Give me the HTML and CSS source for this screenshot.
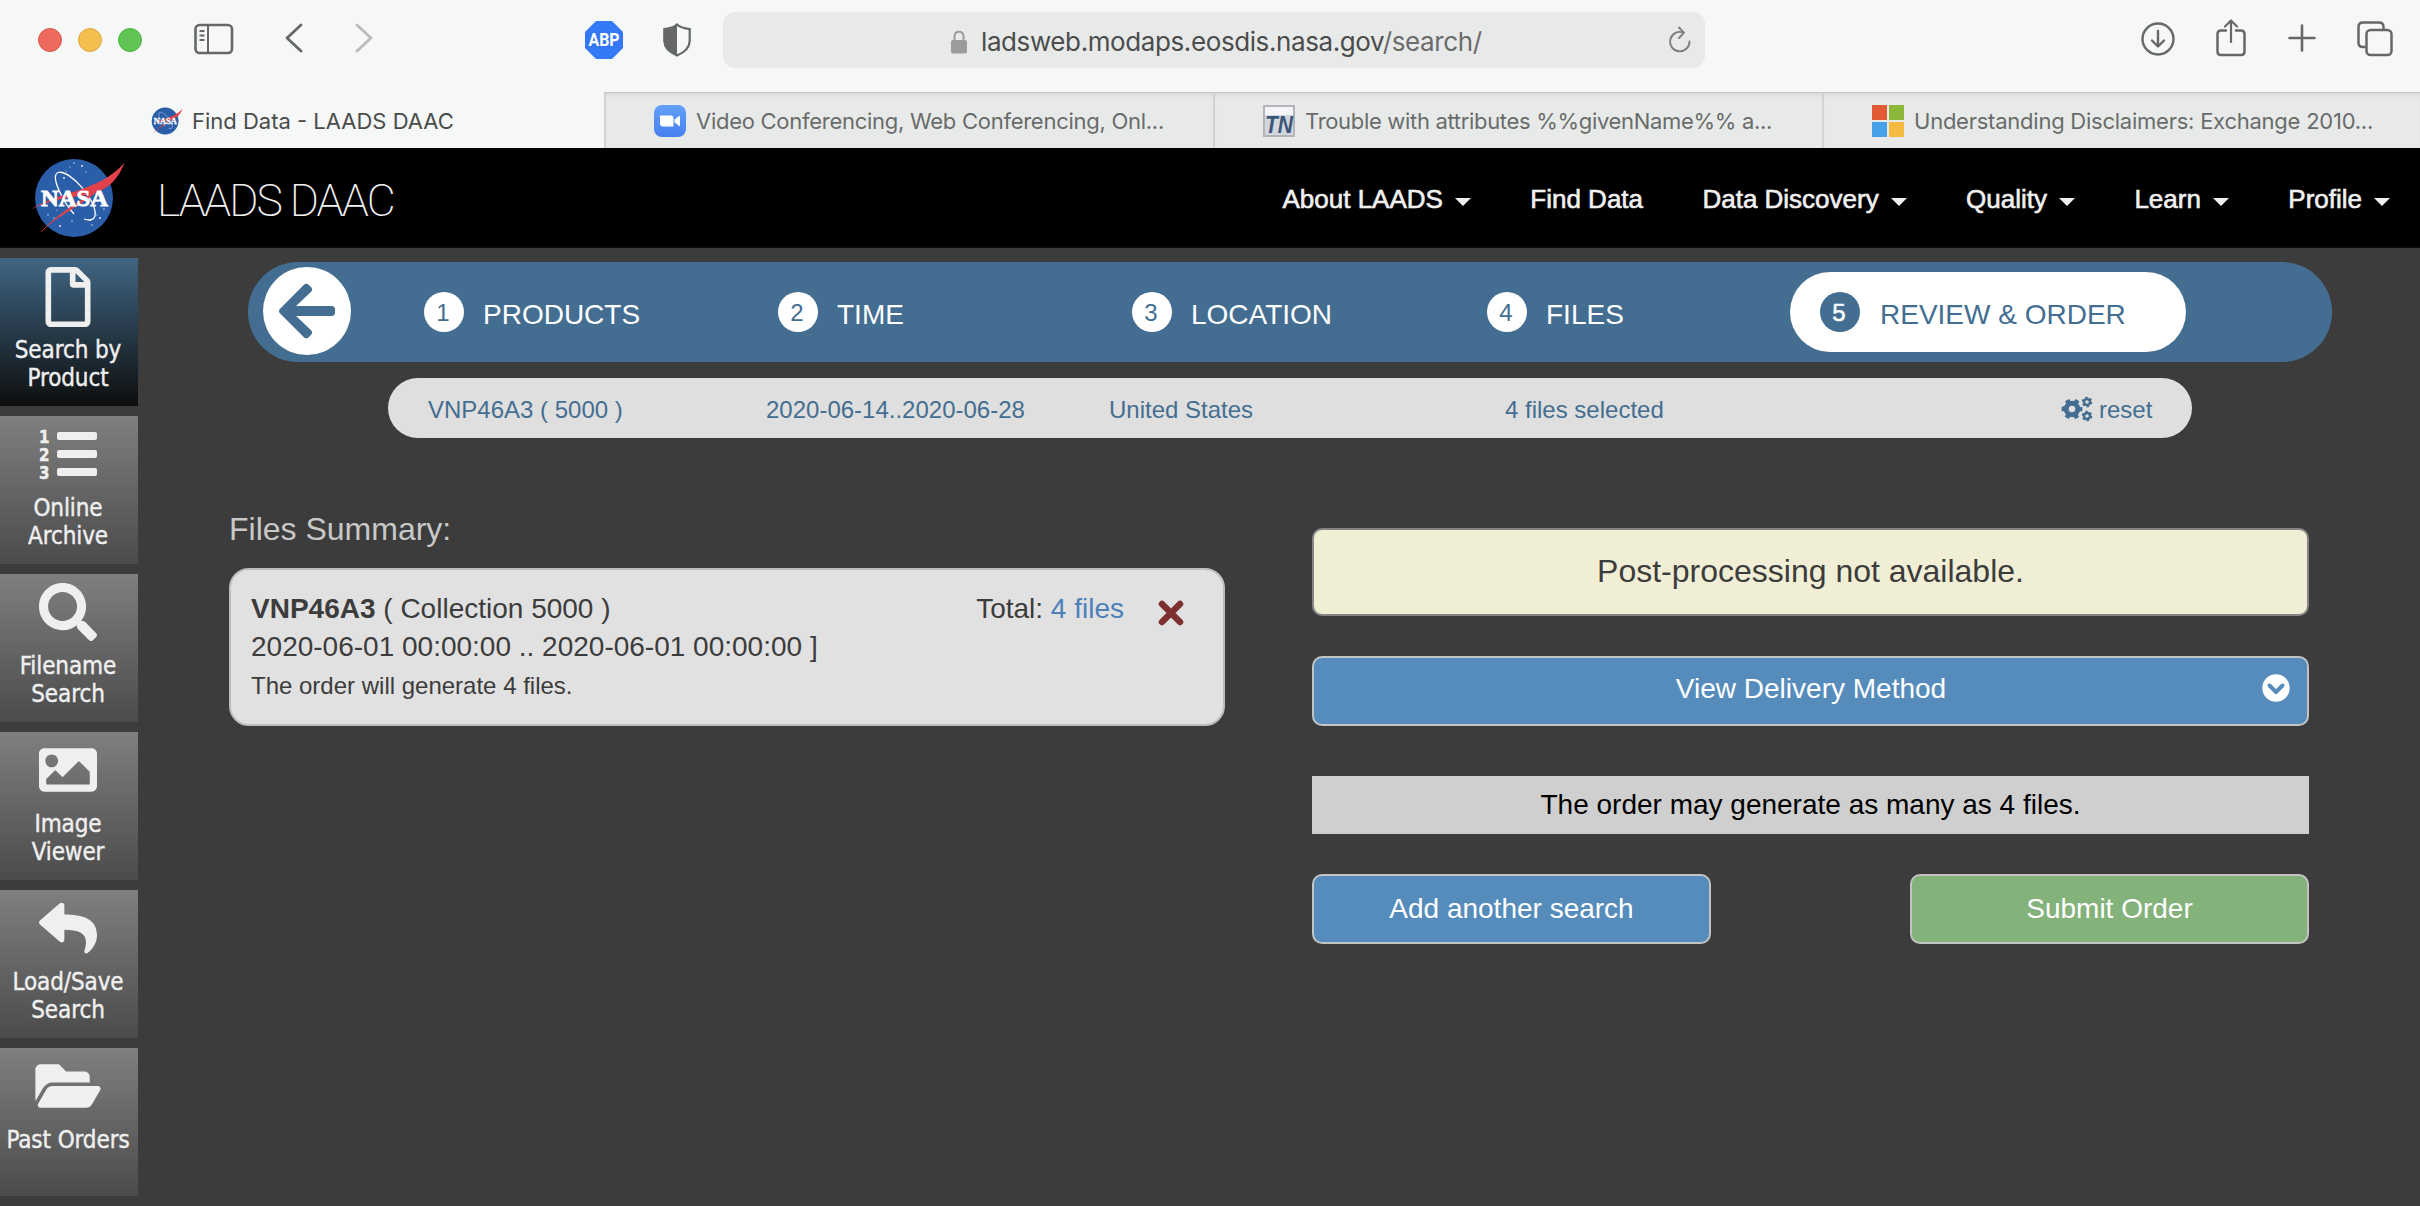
FILE: index.html
```html
<!DOCTYPE html>
<html lang="en">
<head>
<meta charset="utf-8">
<title>Find Data - LAADS DAAC</title>
<link rel="stylesheet" href="styles.css">
</head>
<body>
<div class="toolbar">
  <div class="lights"><i class="red"></i><i class="amber"></i><i class="green"></i></div>
  <svg class="ico-sidebar" width="40" height="32" viewBox="0 0 40 32" fill="none" stroke="#656867" stroke-width="2.600"><rect x="1.500" y="2" width="36.500" height="28" rx="4"/><path d="M14 2V30" stroke-width="2"/><path d="M5.500 8H10.500M5.500 12.500H10.500M5.500 17H10.500" stroke-width="1.800"/></svg>
  <svg class="ico-back" width="18" height="30" viewBox="0 0 18 30" fill="none" stroke="#656867" stroke-width="2.800" stroke-linecap="round" stroke-linejoin="round"><path d="M16 2L2 15L16 28"/></svg>
  <svg class="ico-fwd" width="18" height="30" viewBox="0 0 18 30" fill="none" stroke="#b9bbba" stroke-width="2.800" stroke-linecap="round" stroke-linejoin="round"><path d="M2 2L16 15L2 28"/></svg>
  <svg class="ico-abp" width="38" height="38" viewBox="0 0 38 38"><path d="M11 0H27L38 11V27L27 38H11L0 27V11Z" fill="#3478f6"/><text x="3.500" y="25" textLength="31" lengthAdjust="spacingAndGlyphs" font-family="Roboto, sans-serif" font-weight="700" font-size="17.500" fill="#fff">ABP</text></svg>
  <svg class="ico-shield" width="28" height="34" viewBox="0 0 28 34"><path d="M14 1.500C17 4.500 22 5.500 26.700 6V18C26.500 25 20 30 14 32.500C8 30 1.500 25 1.300 18V6C6 5.500 11 4.500 14 1.500Z" fill="none" stroke="#656867" stroke-width="2.200"/><path d="M14 1.500V32.500C8 30 1.500 25 1.300 18V6C6 5.500 11 4.500 14 1.500Z" fill="#656867"/></svg>
  <div class="address">
    <svg class="ico-lock" width="16" height="24" viewBox="0 0 16 24"><path d="M3.500 11V6.500C3.500 0 12.500 0 12.500 6.500V11" fill="none" stroke="#9a9c9b" stroke-width="2"/><rect x="0" y="10" width="16" height="13.500" rx="2" fill="#9a9c9b"/></svg>
    <span class="url">ladsweb.modaps.eosdis.nasa.gov<span class="path">/search/</span></span>
    <svg class="ico-reload" width="22" height="28" viewBox="0 0 22 28" fill="none" stroke="#7d807f" stroke-width="1.900" stroke-linecap="round" stroke-linejoin="round"><path d="M20.500 15.500A9.700 9.700 0 1 1 14 6.500"/><path d="M10 1.500L15 6.700L10 12"/></svg>
  </div>
  <svg class="ico-down" width="34" height="34" viewBox="0 0 34 34" fill="none" stroke="#656867" stroke-width="2.400" stroke-linecap="round" stroke-linejoin="round"><circle cx="17" cy="17" r="15.500"/><path d="M17 9V24M11 18.500L17 24.500L23 18.500"/></svg>
  <svg class="ico-share" width="30" height="38" viewBox="0 0 30 38" fill="none" stroke="#656867" stroke-width="2.500" stroke-linecap="round" stroke-linejoin="round"><path d="M10 11.500H5Q1.500 11.500 1.500 15V32.500Q1.500 36 5 36H25Q28.500 36 28.500 32.500V15Q28.500 11.500 25 11.500H20"/><path d="M15 23V2M9 7.500L15 1.500L21 7.500" stroke-width="2.200"/></svg>
  <svg class="ico-plus" width="28" height="28" viewBox="0 0 28 28" stroke="#656867" stroke-width="2.600" stroke-linecap="round"><path d="M14 1.500V26.500M1.500 14H26.500"/></svg>
  <svg class="ico-tabs" width="36" height="36" viewBox="0 0 36 36" fill="none" stroke="#656867" stroke-width="2.500"><rect x="9.500" y="9" width="25" height="25" rx="4"/><path d="M9.500 26H6Q1.500 26 1.500 22V6Q1.500 1.500 6 1.500H22Q26.500 1.500 26.500 6V9"/></svg>
</div>

<div class="tabs">
  <div class="tab active">
    <svg width="33" height="28" viewBox="0 0 96 80">
      <circle cx="44" cy="40" r="39" fill="#2b5ea8"/>
      <path d="M44 56C33 44 20 18 28 14.500C40 11 68 44 65 58Q63 64 54 61" fill="none" stroke="#b9cbe6" stroke-width="1.600"/>
      <path d="M.500 51.500C30 33 68 34 94.500 5C86 26 74 33 58 37C34 40 20 42 .500 51.500Z" fill="#e0414a"/>
      <path d="M11 74C34 50 52 44 78 23C56 47 30 54 11 74Z" fill="#e0414a" stroke="#e0414a" stroke-width=".6"/>
      <text x="11" y="47.500" textLength="67" lengthAdjust="spacingAndGlyphs" font-family="Liberation Serif, serif" font-weight="700" font-size="22.500" fill="#fff" stroke="#fff" stroke-width=".8">NASA</text>
    </svg>
    <span class="t1">Find Data - LAADS DAAC</span>
  </div>
  <div class="tab">
    <svg width="32" height="32" viewBox="0 0 32 32"><defs><linearGradient id="zg" x1="0" y1="0" x2="0" y2="1"><stop offset="0" stop-color="#62a0f8"/><stop offset="1" stop-color="#4680f0"/></linearGradient></defs><rect width="32" height="32" rx="8" fill="url(#zg)"/><path d="M6 10.500H16.500Q19.500 10.500 19.500 13.500V21.500H9Q6 21.500 6 18.500ZM20.500 14.500L26 10.500V21.500L20.500 17.500Z" fill="#fff"/></svg>
    <span class="t2">Video Conferencing, Web Conferencing, Onl...</span>
  </div>
  <div class="tab">
    <svg width="32" height="32" viewBox="0 0 32 32"><rect x="1" y="1" width="30" height="30" fill="#d3d6df" stroke="#b3b5b8" stroke-width="2"/><rect x="2" y="2" width="28" height="8" fill="#f4f5f6"/><text x="2" y="28" textLength="28" lengthAdjust="spacingAndGlyphs" font-family="Liberation Sans, sans-serif" font-style="italic" font-weight="700" font-size="23" fill="#3c5678">TN</text></svg>
    <span class="t3">Trouble with attributes %%givenName%% a...</span>
  </div>
  <div class="tab">
    <svg width="32" height="32" viewBox="0 0 32 32"><path d="M0 0H15V15H0Z" fill="#e25a33"/><path d="M17 0H32V15H17Z" fill="#8cb738"/><path d="M0 17H15V32H0Z" fill="#46a0ea"/><path d="M17 17H32V32H17Z" fill="#f5ba41"/></svg>
    <span class="t4">Understanding Disclaimers: Exchange 2010...</span>
  </div>
</div>

<header class="site">
  <svg class="logo" width="96" height="80" viewBox="0 0 96 80">
    <circle cx="44" cy="40" r="39" fill="#2b5ea8"/>
    <g fill="#dfe8f5">
      <circle cx="34" cy="20" r="1"/><circle cx="52" cy="8" r="1"/><circle cx="44" cy="5" r=".7"/><circle cx="40" cy="9" r=".6"/><circle cx="56" cy="14" r=".6"/><circle cx="36" cy="13" r=".6"/>
      <circle cx="30" cy="68" r="1"/><circle cx="24" cy="60" r=".7"/><circle cx="18" cy="57" r=".7"/><circle cx="42" cy="63" r=".7"/><circle cx="70" cy="60" r="1"/><circle cx="74" cy="51" r=".8"/><circle cx="62" cy="67" r=".7"/><circle cx="27" cy="52" r=".6"/><circle cx="67" cy="57" r=".6"/>
    </g>
    <path d="M44 56C33 44 20 18 28 14.500C40 11 68 44 65 58Q63 64 54 61" fill="none" stroke="#fff" stroke-width="1.300"/>
    <path d="M.500 51.500C30 33 68 34 94.500 5C86 26 74 33 58 37C34 40 20 42 .500 51.500Z" fill="#e0414a"/>
    <path d="M11 74C34 50 52 44 78 23C56 47 30 54 11 74Z" fill="#e0414a" stroke="#e0414a" stroke-width=".6"/>
    <text x="11" y="47.500" textLength="67" lengthAdjust="spacingAndGlyphs" font-family="Liberation Serif, serif" font-weight="700" font-size="22.500" fill="#fff" stroke="#fff" stroke-width=".8">NASA</text>
  </svg>
  <span class="brand">LAADS DAAC</span>
  <nav>
    <a>About LAADS<i class="caret"></i></a>
    <a>Find Data</a>
    <a>Data Discovery<i class="caret"></i></a>
    <a>Quality<i class="caret"></i></a>
    <a>Learn<i class="caret"></i></a>
    <a>Profile<i class="caret"></i></a>
  </nav>
</header>

<div class="page">
  <aside>
    <a class="side active"><svg width="60" height="60" viewBox="-64 0 512 512"><path d="M369.900 97.900L286 14C277 5 264.800-.1 252.100-.1H48C21.500 0 0 21.500 0 48v416c0 26.500 21.500 48 48 48h288c26.500 0 48-21.500 48-48V131.900c0-12.700-5.100-25-14.100-34zM332.100 128H256V51.900l76.100 76.100zM48 464V48h160v104c0 13.300 10.700 24 24 24h104v288H48z"/></svg><span>Search by<br>Product</span></a>
    <a class="side"><svg width="60" height="60" viewBox="0 0 60 60"><rect x="19" y="7" width="40" height="8" rx="2"/><rect x="19" y="25" width="40" height="8" rx="2"/><rect x="19" y="43" width="40" height="8" rx="2"/><g font-family="DejaVu Sans" font-weight="700" font-size="18.500" letter-spacing="0" stroke="#efefef" stroke-width=".5"><text x="1" y="18" textLength="10.500" lengthAdjust="spacingAndGlyphs">1</text><text x="1" y="36" textLength="10.500" lengthAdjust="spacingAndGlyphs">2</text><text x="1" y="54" textLength="10.500" lengthAdjust="spacingAndGlyphs">3</text></g></svg><span>Online<br>Archive</span></a>
    <a class="side"><svg width="58" height="58" viewBox="0 0 512 512"><path d="M505 442.700L405.300 343c-4.500-4.500-10.600-7-17-7H372c27.600-35.300 44-79.700 44-128C416 93.100 322.900 0 208 0S0 93.100 0 208s93.100 208 208 208c48.300 0 92.700-16.400 128-44v16.300c0 6.400 2.500 12.500 7 17l99.700 99.700c9.400 9.400 24.600 9.400 33.900 0l28.300-28.300c9.400-9.400 9.400-24.600.1-34zM208 336c-70.700 0-128-57.200-128-128 0-70.700 57.200-128 128-128 70.700 0 128 57.200 128 128 0 70.700-57.200 128-128 128z"/></svg><span>Filename<br>Search</span></a>
    <a class="side"><svg width="58" height="58" viewBox="0 0 512 512"><path d="M464 448H48c-26.510 0-48-21.490-48-48V112c0-26.510 21.490-48 48-48h416c26.510 0 48 21.490 48 48v288c0 26.510-21.490 48-48 48zM112 120c-30.928 0-56 25.072-56 56s25.072 56 56 56 56-25.072 56-56-25.072-56-56-56zM64 384h384V272l-87.515-87.515c-4.686-4.686-12.284-4.686-16.971 0L208 320l-55.515-55.515c-4.686-4.686-12.284-4.686-16.971 0L64 336v48z"/></svg><span>Image<br>Viewer</span></a>
    <a class="side"><svg width="58" height="58" viewBox="0 0 512 512"><path d="M8.309 189.836L184.313 37.851C199.719 24.546 224 35.347 224 56.015v80.053c160.629 1.839 288 34.032 288 186.258 0 61.441-39.581 122.309-83.333 154.132-13.653 9.931-33.111-2.533-28.077-18.631 45.344-145.012-21.507-183.510-176.590-185.742V360c0 20.700-24.300 31.453-39.687 18.164l-176.004-152c-11.071-9.562-11.086-26.753 0-36.328z"/></svg><span>Load/Save<br>Search</span></a>
    <a class="side"><svg width="66" height="58" viewBox="0 0 576 512"><path d="M572.694 292.093L500.270 416.248A63.997 63.997 0 0 1 444.989 448H45.025c-18.523 0-30.064-20.093-20.731-36.093l72.424-124.155A64 64 0 0 1 152 256h399.964c18.523 0 30.064 20.093 20.730 36.093zM152 224h328v-48c0-26.510-21.490-48-48-48H272l-64-64H48C21.490 64 0 85.490 0 112v278.046l69.077-118.418C86.214 242.250 117.989 224 152 224z"/></svg><span>Past Orders</span></a>
  </aside>

  <main>
    <div class="steps">
      <a class="back"><svg width="56" height="64" viewBox="0 0 448 512"><path fill="#446e91" d="M257.500 445.100l-22.200 22.200c-9.400 9.400-24.600 9.400-33.900 0L7 273c-9.400-9.400-9.400-24.600 0-33.900L201.400 44.700c9.400-9.400 24.600-9.400 33.900 0l22.200 22.200c9.500 9.500 9.300 25-.4 34.300L136.600 216H424c13.300 0 24 10.700 24 24v32c0 13.300-10.700 24-24 24H136.600l120.500 114.800c9.800 9.300 10 24.800.4 34.300z"/></svg></a>
      <a class="step"><b>1</b><span>PRODUCTS</span></a>
      <a class="step"><b>2</b><span>TIME</span></a>
      <a class="step"><b>3</b><span>LOCATION</span></a>
      <a class="step"><b>4</b><span>FILES</span></a>
      <a class="step current"><b>5</b><span>REVIEW &amp; ORDER</span></a>
    </div>
    <div class="criteria">
      <span>VNP46A3 ( 5000 )</span>
      <span>2020-06-14..2020-06-28</span>
      <span>United States</span>
      <span>4 files selected</span>
      <span class="reset"><svg width="32" height="26" viewBox="0 0 32 26" fill="none" stroke="#446e91"><circle cx="11" cy="13" r="5.800" stroke-width="5"/><circle cx="11" cy="13" r="8.900" stroke-width="3" stroke-dasharray="4.600 4.720" stroke-dashoffset="2.300"/><circle cx="26" cy="6" r="3" stroke-width="2.400"/><circle cx="26" cy="6" r="4.500" stroke-width="1.600" stroke-dasharray="2.500 2.212"/><circle cx="26" cy="20" r="3" stroke-width="2.400"/><circle cx="26" cy="20" r="4.500" stroke-width="1.600" stroke-dasharray="2.500 2.212"/></svg>reset</span>
    </div>
    <div class="columns">
      <section class="summary">
        <h2>Files Summary:</h2>
        <div class="card">
          <div class="info">
            <p><strong>VNP46A3</strong> ( Collection 5000 )</p>
            <p>2020-06-01 00:00:00 .. 2020-06-01 00:00:00 ]</p>
            <p class="small">The order will generate 4 files.</p>
          </div>
          <div class="total">Total: <a>4 files</a></div>
          <svg class="remove" width="26" height="26" viewBox="0 0 26 26" stroke="#7e2f2f" stroke-width="6.500" stroke-linecap="round"><path d="M4 4L22 22M22 4L4 22"/></svg>
        </div>
      </section>
      <section class="order">
        <div class="notice">Post-processing not available.</div>
        <div class="btn delivery"><span>View Delivery Method</span><svg width="28" height="28" viewBox="0 0 28 28"><circle cx="14" cy="14" r="13.700" fill="#fff"/><path d="M7.500 11.500L14 18L20.500 11.500" fill="none" stroke="#568cbb" stroke-width="4" stroke-linecap="round" stroke-linejoin="round"/></svg></div>
        <div class="count">The order may generate as many as 4 files.</div>
        <div class="actions"><div class="btn">Add another search</div><div class="btn submit">Submit Order</div></div>
      </section>
    </div>
  </main>
</div>
</body>
</html>
```
FILE: styles.css
```css
* { box-sizing: border-box; }
body { margin: 0; width: 2420px; height: 1206px; overflow: hidden; background: #3c3c3c; font-family: "Liberation Sans", Arial, sans-serif; }
svg { display: block; flex: none; }
h2, p { margin: 0; font-weight: 400; }

/* Browser toolbar */
.toolbar { height: 92px; background: #f6f8f7; display: flex; align-items: flex-start; padding-left: 38px; }
.lights { display: flex; gap: 16px; margin-top: 28px; }
.lights i { width: 24px; height: 24px; border-radius: 50%; border-width: 1px; border-style: solid; }
.red { background: #ec6a5e; border-color: #d8584d; }
.amber { background: #f4bf4f; border-color: #dca63c; }
.green { background: #61c554; border-color: #4fae43; }
.ico-sidebar { margin: 23px 0 0 52px; }
.ico-back { margin: 23px 0 0 51px; }
.ico-fwd { margin: 23px 0 0 52px; }
.ico-abp { margin: 21px 0 0 212px; }
.ico-shield { margin: 23px 0 0 40px; }
.address { width: 982px; height: 56px; margin: 12px 0 0 32px; background: #e8eae9; border-radius: 12px; display: flex; padding-left: 228px; }
.ico-lock { margin-top: 18px; }
.url { width: 500px; margin-left: 14px; margin-top: 1px; font: 400 26px/58px Inter, sans-serif; letter-spacing: -.4px; color: #4b4d4c; white-space: nowrap; }
.url .path { color: #6a6c6b; }
.ico-reload { margin: 14px 0 0 188px; }
.ico-down { margin: 22px 0 0 436px; }
.ico-share { margin: 19px 0 0 41px; }
.ico-plus { margin: 24px 0 0 42px; }
.ico-tabs { margin: 21px 0 0 41px; }

/* Tab strip */
.tabs { height: 56px; display: grid; grid-template-columns: 604px 609px 609px 1fr; background: #e8eae9; }
.tab { display: flex; align-items: center; padding: 1px 0 0 48px; gap: 10px; border-left: 2px solid #d2d4d3; border-top: 1px solid #c2c4c3; box-shadow: inset 0 4px 4px -2px #d6d8d7; font: 400 22px/30px Inter, sans-serif; color: #696c6a; white-space: nowrap; }
.tab.active { background: #f6f8f7; border: 0; box-shadow: none; padding-left: 150px; padding-top: 2px; gap: 9px; color: #4a4c4b; }
.t2 { letter-spacing: -.27px; }
.t3 { letter-spacing: -.32px; }
.t4 { letter-spacing: -.24px; }

/* Site header */
.site { height: 100px; background: #000; border-bottom: 2px solid #0a0a0a; display: flex; align-items: flex-start; padding: 0 30px 0 30px; color: #f0f0f0; }
.logo { margin-top: 10px; }
.brand { margin-left: 31px; font: 200 44.500px/98px Roboto, sans-serif; letter-spacing: -1.850px; padding-top: 4px; white-space: nowrap; }
nav { margin-left: auto; display: flex; gap: 59.400px; padding-top: 2px; }
nav a { display: flex; align-items: center; font-size: 26px; line-height: 98px; white-space: nowrap; -webkit-text-stroke: .6px #f0f0f0; }
.caret { margin: 6px 0 0 12px; border: 8px solid transparent; border-top-color: #f0f0f0; border-bottom: 0; }

.page { display: flex; }

/* Left navigation */
aside { width: 138px; flex: none; padding-top: 10px; display: flex; flex-direction: column; gap: 10px; }
.side { height: 148px; background: linear-gradient(#7f7f7f, #4b4b4b); display: flex; flex-direction: column; align-items: center; padding: 9px 2px 0 0; color: #efefef; font: 24px/28px "DejaVu Sans Condensed", "DejaVu Sans", sans-serif; font-stretch: condensed; letter-spacing: -.1px; text-align: center; white-space: nowrap; }
.side.active { background: linear-gradient(#406583, #0d0e0e); }
.side svg { fill: #efefef; }
.side span { margin-top: auto; height: 70px; -webkit-text-stroke: .4px #efefef; }

/* Steps */
main { flex: 1; padding: 14px 88px 0 110px; }
.steps { height: 100px; border-radius: 50px; background: #446e91; display: grid; grid-template-columns: 148px 354px 354px 355px 331px 396px; align-items: center; }
.back { width: 88px; height: 88px; margin: -3px 0 0 15px; border-radius: 50%; background: #fff; display: flex; align-items: center; justify-content: center; }
.step { display: flex; align-items: center; gap: 19px; height: 80px; padding-left: 28px; color: #fff; font-size: 28px; }
.step b { width: 40px; height: 40px; border-radius: 50%; background: #fff; color: #446e91; font-weight: 400; font-size: 24px; line-height: 42px; text-align: center; padding-right: 2px; }
.step span { padding-top: 6px; white-space: nowrap; }
.step.current { background: #fff; border-radius: 40px; padding-left: 30px; gap: 20px; color: #446e91; }
.current b { background: #446e91; color: #fff; -webkit-text-stroke: .5px #fff; }

.criteria { width: 1804px; height: 60px; margin: 16px 0 0 140px; padding: 4px 0 0 40px; border-radius: 30px; background: #dfdfdf; display: grid; grid-template-columns: 338px 343px 396px 556px 1fr; align-items: center; font-size: 24px; color: #446e91; white-space: nowrap; }
.reset { display: flex; align-items: center; gap: 6px; }
.reset svg { margin-top: -2px; }

/* Content */
.columns { display: flex; justify-content: space-between; padding: 71px 23px 0 0; margin-left: -19px; }
.summary { width: 996px; }
h2 { font-size: 32px; line-height: 40px; color: #c8c8c8; }
.card { margin-top: 19px; height: 158px; border: 2px solid #bdbdbd; border-radius: 20px; background: #e1e1e1; padding: 20px 39px 0 20px; display: flex; align-items: flex-start; color: #3c3c3c; font-size: 28px; line-height: 38px; white-space: nowrap; }
.info { flex: 1; }
.info .small { font-size: 24px; line-height: 40px; }
.total a { color: #4d80b8; }
.remove { margin: 10px 0 0 34px; }
.order { width: 997px; padding-top: 19px; text-align: center; }
.notice { height: 88px; border: 2px solid #858585; border-radius: 10px; background: #f0efd5; font-size: 32px; line-height: 82px; color: #3c3c3c; }
.btn { height: 70px; border: 2px solid #c3c3c3; border-radius: 10px; background: #568cbb; color: #fff; font-size: 28px; line-height: 65px; }
.delivery { margin-top: 40px; display: flex; align-items: flex-start; line-height: 62px; }
.delivery span { flex: 1; padding-left: 46px; }
.delivery svg { margin: 16px 17px 0 0; }
.count { margin-top: 50px; height: 58px; background: #cfcfcf; color: #000; font-size: 28px; line-height: 57px; }
.actions { margin-top: 40px; display: flex; justify-content: space-between; }
.actions .btn { width: 399px; }
.submit { background: #84b27b; }
```
